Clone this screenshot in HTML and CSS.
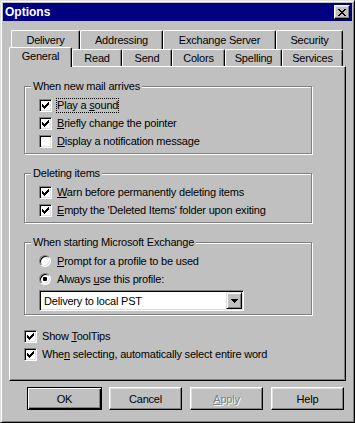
FILE: index.html
```html
<!DOCTYPE html>
<html>
<head>
<title>Options</title>
<link rel="stylesheet" href="styles.css">
</head>
<body>
<div class="window">
  <div class="titlebar">
    <span class="title">Options</span>
    <span class="close">
      <svg width="8" height="7" viewBox="0 0 8 7" shape-rendering="crispEdges"><path d="M0 0h2v1h-2zM6 0h2v1h-2zM1 1h2v1h-2zM5 1h2v1h-2zM2 2h4v1h-4zM3 3h2v1h-2zM2 4h4v1h-4zM1 5h2v1h-2zM5 5h2v1h-2zM0 6h2v1h-2zM6 6h2v1h-2z" fill="#000"/></svg>
    </span>
  </div>

  <div class="tabs">
    <div class="tabrow back">
      <div class="tab t-delivery">Delivery</div>
      <div class="tab t-addressing">Addressing</div>
      <div class="tab t-exchange">Exchange Server</div>
      <div class="tab t-security">Security</div>
    </div>
    <div class="tabrow front">
      <div class="tab active t-general">General</div>
      <div class="tab t-read">Read</div>
      <div class="tab t-send">Send</div>
      <div class="tab t-colors">Colors</div>
      <div class="tab t-spelling">Spelling</div>
      <div class="tab t-services">Services</div>
    </div>
  </div>

  <div class="panel">
    <div class="group">
      <div class="legend">When new mail arrives</div>
      <div class="row"><span class="check"><svg width="7" height="7" viewBox="0 0 7 7" shape-rendering="crispEdges"><path d="M0 2h1v1h1v1h1v-1h1v-1h1v-1h1v-1h1v3h-1v1h-1v1h-1v1h-1v1h-1v-1h-1v-1h-1v-1h-1z" fill="#000"/></svg></span><span class="label focus">Play a <u>s</u>ound</span></div>
      <div class="row"><span class="check"><svg width="7" height="7" viewBox="0 0 7 7" shape-rendering="crispEdges"><path d="M0 2h1v1h1v1h1v-1h1v-1h1v-1h1v-1h1v3h-1v1h-1v1h-1v1h-1v1h-1v-1h-1v-1h-1v-1h-1z" fill="#000"/></svg></span><span class="label"><u>B</u>riefly change the pointer</span></div>
      <div class="row"><span class="check"></span><span class="label"><u>D</u>isplay a notification message</span></div>
    </div>

    <div class="group">
      <div class="legend">Deleting items</div>
      <div class="row"><span class="check"><svg width="7" height="7" viewBox="0 0 7 7" shape-rendering="crispEdges"><path d="M0 2h1v1h1v1h1v-1h1v-1h1v-1h1v-1h1v3h-1v1h-1v1h-1v1h-1v1h-1v-1h-1v-1h-1v-1h-1z" fill="#000"/></svg></span><span class="label"><u>W</u>arn before permanently deleting items</span></div>
      <div class="row"><span class="check"><svg width="7" height="7" viewBox="0 0 7 7" shape-rendering="crispEdges"><path d="M0 2h1v1h1v1h1v-1h1v-1h1v-1h1v-1h1v3h-1v1h-1v1h-1v1h-1v1h-1v-1h-1v-1h-1v-1h-1z" fill="#000"/></svg></span><span class="label"><u>E</u>mpty the 'Deleted Items' folder upon exiting</span></div>
    </div>

    <div class="group">
      <div class="legend">When starting Microsoft Exchange</div>
      <div class="row"><span class="radio"></span><span class="label"><u>P</u>rompt for a profile to be used</span></div>
      <div class="row"><span class="radio"><span class="dot"></span></span><span class="label">Always <u>u</u>se this profile:</span></div>
      <div class="combo">
        <span class="combo-text">Delivery to local PST</span>
        <span class="combo-btn"><svg width="7" height="4" viewBox="0 0 7 4" shape-rendering="crispEdges"><path d="M0 0h7v1h-1v1h-1v1h-1v1h-1v-1h-1v-1h-1v-1h-1z" fill="#000"/></svg></span>
      </div>
    </div>

    <div class="extras">
      <div class="row"><span class="check"><svg width="7" height="7" viewBox="0 0 7 7" shape-rendering="crispEdges"><path d="M0 2h1v1h1v1h1v-1h1v-1h1v-1h1v-1h1v3h-1v1h-1v1h-1v1h-1v1h-1v-1h-1v-1h-1v-1h-1z" fill="#000"/></svg></span><span class="label">Show <u>T</u>oolTips</span></div>
      <div class="row"><span class="check"><svg width="7" height="7" viewBox="0 0 7 7" shape-rendering="crispEdges"><path d="M0 2h1v1h1v1h1v-1h1v-1h1v-1h1v-1h1v3h-1v1h-1v1h-1v1h-1v1h-1v-1h-1v-1h-1v-1h-1z" fill="#000"/></svg></span><span class="label">Whe<u>n</u> selecting, automatically select entire word</span></div>
    </div>
  </div>

  <div class="buttons">
    <span class="btn default">OK</span>
    <span class="btn">Cancel</span>
    <span class="btn disabled"><u>A</u>pply</span>
    <span class="btn">Help</span>
  </div>
</div>
</body>
</html>
```

FILE: styles.css
```css
body {
	margin: 0;
	background-color: #c0c0c0;
	font-family: "Liberation Sans", Arial, sans-serif;
	font-size: 11px;
	letter-spacing: -0.2px;
	color: #000;
}

.window {
	box-sizing: border-box;
	width: 355px;
	height: 423px;
	padding: 2px;
	background-color: #c0c0c0;
	border: 1px solid;
	border-color: #dfdfdf #000 #000 #dfdfdf;
	box-shadow: inset 1px 1px #fff, inset -1px -1px #808080;
}

/* title bar */
.titlebar {
	height: 18px;
	padding: 0 2px;
	display: flex;
	align-items: center;
	justify-content: space-between;
	background-color: #000080;
	color: #fff;
}
.title {
	font-size: 12px;
	font-weight: bold;
	letter-spacing: 0;
}
.close {
	box-sizing: border-box;
	width: 16px;
	height: 14px;
	display: flex;
	align-items: center;
	justify-content: center;
	padding-right: 1px;
	background-color: #c0c0c0;
	border: 1px solid;
	border-color: #fff #000 #000 #fff;
	box-shadow: inset -1px -1px #808080, inset 1px 1px #dfdfdf;
}
.close svg, .combo-btn svg, .check svg {
	display: block;
}

/* tabs */
.tabs {
	margin-top: 9px;
}
.tabrow {
	display: flex;
}
.back {
	height: 19px;
	padding-left: 8px;
}
.front {
	height: 17px;
	padding-left: 6px;
	align-items: flex-end;
}
.tab {
	box-sizing: border-box;
	height: 100%;
	display: flex;
	align-items: center;
	justify-content: center;
	background-color: #c0c0c0;
	border: 1px solid;
	border-color: #fff #000 transparent #fff;
	border-bottom: none;
	border-radius: 2px 2px 0 0;
	box-shadow: inset -1px 0 #808080;
}
.tab.active {
	position: relative;
	z-index: 1;
	height: 20px;
	margin-bottom: -1px;
	padding-bottom: 3px;
}
.t-delivery { width: 69px; }
.t-addressing { width: 83px; }
.t-exchange { width: 113px; }
.t-security { width: 67px; }
.t-general { width: 63px; }
.t-read { width: 50px; }
.t-send { width: 50px; }
.t-colors { width: 53px; }
.t-spelling { width: 57px; }
.t-services { width: 61px; }

/* page */
.panel {
	box-sizing: border-box;
	width: 337px;
	height: 315px;
	margin-left: 6px;
	padding: 19px 0 0 14px;
	border: 1px solid;
	border-color: #fff #000 #000 #fff;
	box-shadow: inset -1px -1px #808080;
}
.group {
	box-sizing: border-box;
	width: 288px;
	margin-bottom: 19px;
	padding: 0 2px 3px 14px;
	border: 1px solid #808080;
	box-shadow: inset 1px 1px #fff, 1px 1px #fff;
}
.legend {
	display: table;
	margin: -7px 0 3px -8px;
	padding: 0 2px;
	line-height: 13px;
	background-color: #c0c0c0;
}
.row {
	height: 18px;
	display: flex;
	align-items: center;
	gap: 5px;
}
.label {
	line-height: 13px;
	white-space: nowrap;
}
.focus {
	outline: 1px dotted #000;
	outline-offset: 0;
}
u {
	text-decoration: underline;
}

.check {
	box-sizing: border-box;
	width: 13px;
	height: 13px;
	flex: none;
	display: flex;
	align-items: center;
	justify-content: center;
	background-color: #fff;
	border: 1px solid;
	border-color: #808080 #fff #fff #808080;
	box-shadow: inset 1px 1px #000, inset -1px -1px #dfdfdf;
}
.radio {
	box-sizing: border-box;
	width: 12px;
	height: 12px;
	flex: none;
	margin-right: 1px;
	display: flex;
	align-items: center;
	justify-content: center;
	border-radius: 50%;
	background-color: #fff;
	border: 1px solid;
	border-color: #808080 #fff #fff #808080;
	box-shadow: inset 1px 1px #000, inset -1px -1px #dfdfdf;
}
.dot {
	width: 4px;
	height: 4px;
	border-radius: 1px;
	background-color: #000;
}

.combo {
	box-sizing: border-box;
	width: 205px;
	height: 21px;
	margin-top: 2px;
	padding: 1px 1px 1px 4px;
	display: flex;
	align-items: center;
	background-color: #fff;
	border: 1px solid;
	border-color: #808080 #fff #fff #808080;
	box-shadow: inset 1px 1px #000, inset -1px -1px #dfdfdf;
}
.combo-text {
	flex: 1;
}
.combo-btn {
	box-sizing: border-box;
	width: 16px;
	height: 17px;
	display: flex;
	align-items: center;
	justify-content: center;
	background-color: #c0c0c0;
	border: 1px solid;
	border-color: #dfdfdf #000 #000 #dfdfdf;
	box-shadow: inset 1px 1px #fff, inset -1px -1px #808080;
}

.extras {
	margin-top: -7px;
}

/* dialog buttons */
.buttons {
	display: flex;
	margin: 6px 0 0 24px;
}
.btn {
	box-sizing: border-box;
	width: 73px;
	height: 23px;
	margin-left: 8px;
	display: flex;
	align-items: center;
	justify-content: center;
	border: 1px solid;
	border-color: #fff #000 #000 #fff;
	box-shadow: inset -1px -1px #808080, inset 1px 1px #dfdfdf;
}
.btn.default {
	width: 75px;
	margin-left: 0;
	margin-right: -1px;
	border-color: #000;
	box-shadow: inset 1px 1px #fff, inset -1px -1px #000, inset -2px -2px #808080;
}
.btn.disabled {
	color: #808080;
	text-shadow: 1px 1px #fff;
}
```
